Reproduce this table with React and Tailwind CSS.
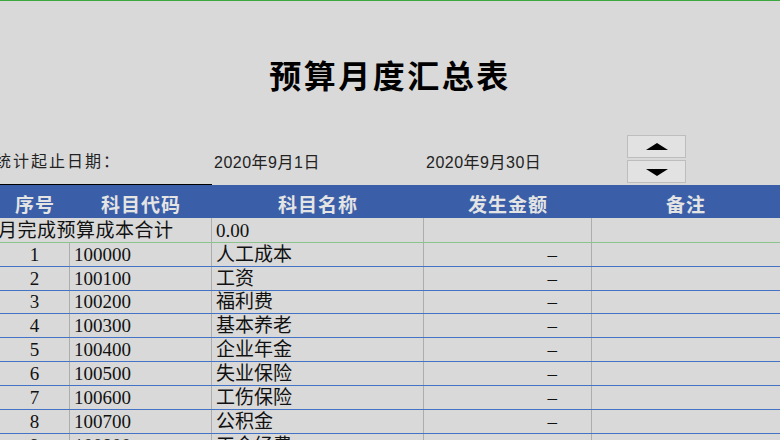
const bodyFont = { fontFamily: "'Liberation Serif', 'Noto Sans CJK SC', serif" };
const dateFont = { fontFamily: "'Liberation Sans', 'Noto Sans CJK SC', sans-serif" };

const rows = [
  { h: 'h-[24px]', no: '1', code: '100000', name: '人工成本' },
  { h: 'h-[24px]', no: '2', code: '100100', name: '工资' },
  { h: 'h-[23px]', no: '3', code: '100200', name: '福利费' },
  { h: 'h-[24px]', no: '4', code: '100300', name: '基本养老' },
  { h: 'h-[24px]', no: '5', code: '100400', name: '企业年金' },
  { h: 'h-[24px]', no: '6', code: '100500', name: '失业保险' },
  { h: 'h-[24px]', no: '7', code: '100600', name: '工伤保险' },
  { h: 'h-[24px]', no: '8', code: '100700', name: '公积金' },
  { h: 'h-[24px]', no: '9', code: '100800', name: '工会经费' },
];

const Spinner = () => (
  <div className="ml-[35px] flex flex-col gap-[2px] pt-[5px]">
    <div className="w-[59px] h-[23px] border border-[#bdbdbd] bg-[#e2e2e2] flex items-center justify-center">
      <svg width="24" height="8" viewBox="0 0 24 8">
        <polygon points="12,0 23,7 1,7" fill="#000" />
      </svg>
    </div>
    <div className="w-[59px] h-[23px] border border-[#bdbdbd] bg-[#e2e2e2] flex items-center justify-center">
      <svg width="24" height="8" viewBox="0 0 24 8">
        <polygon points="1,1 23,1 12,8" fill="#000" />
      </svg>
    </div>
  </div>
);

const Row = ({ h, no, code, name }) => (
  <div className={`flex shrink-0 ${h} border-b border-[#4472c4] text-[19px] leading-[20px] text-[#111]`} style={bodyFont}>
    <div className="w-[70px] border-r border-[#adadad] flex items-end justify-center pb-[1px]">{no}</div>
    <div className="w-[142px] border-r border-[#adadad] flex items-end pl-[4px] pb-[1px]">{code}</div>
    <div className="w-[212px] border-r border-[#adadad] flex items-end pl-[4px] pb-[1px]">{name}</div>
    <div className="w-[168px] border-r border-[#adadad] flex items-end justify-end pr-[34px] pb-[1px]">–</div>
    <div className="w-[188px]"></div>
  </div>
);

export default function App() {
  return (
    <div className="w-[780px] h-[440px] overflow-hidden bg-[#d9d9d9] border-t border-[#3aa83f] flex flex-col">
      {/* Title */}
      <div className="h-[129px] flex justify-center pt-[57px] shrink-0">
        <h1
          className="text-[32px] leading-[32px] font-bold tracking-[2.5px] text-black"
          style={{ fontFamily: "'Noto Sans CJK SC', sans-serif" }}
        >
          预算月度汇总表
        </h1>
      </div>

      {/* Date range row */}
      <div className="h-[55px] flex shrink-0">
        <div className="w-[212px] border-b border-black flex items-end pb-[13px]">
          <span className="-ml-[5px] text-[16px] leading-[18px] tracking-[2px] text-[#222] whitespace-nowrap" style={bodyFont}>
            统计起止日期：
          </span>
        </div>
        <div className="w-[212px] flex items-end pl-[2px] pb-[13px]">
          <span className="text-[16px] leading-[18px] tracking-[0.5px] text-[#222]" style={dateFont}>
            2020年9月1日
          </span>
        </div>
        <div className="w-[168px] flex items-end pl-[2px] pb-[13px]">
          <span className="text-[16px] leading-[18px] tracking-[0.5px] text-[#222]" style={dateFont}>
            2020年9月30日
          </span>
        </div>
        <Spinner />
      </div>

      {/* Header */}
      <div
        className="h-[33px] bg-[#3a5fa8] flex shrink-0 text-[19px] leading-[22px] font-bold text-[#e4e4e4] tracking-[1px]"
        style={{ fontFamily: "'Noto Sans CJK SC', serif" }}
      >
        <div className="w-[70px] flex items-end justify-center pb-[3px]">序号</div>
        <div className="w-[142px] flex items-end justify-center pb-[3px]">科目代码</div>
        <div className="w-[212px] flex items-end justify-center pb-[3px]">科目名称</div>
        <div className="w-[168px] flex items-end justify-center pb-[3px]">发生金额</div>
        <div className="w-[188px] flex items-end justify-center pb-[3px]">备注</div>
      </div>

      {/* Total row */}
      <div
        className="h-[25px] flex shrink-0 border-b border-[#8cc38c] text-[19px] leading-[20px] text-[#111]"
        style={bodyFont}
      >
        <div className="w-[212px] border-r border-[#adadad] flex items-end pb-[1px] overflow-hidden">
          <span className="-ml-[2px] tracking-[0.5px] whitespace-nowrap">月完成预算成本合计</span>
        </div>
        <div className="w-[212px] border-r border-[#adadad] flex items-end pl-[4px] pb-[1px]">0.00</div>
        <div className="w-[168px] border-r border-[#adadad]"></div>
        <div className="w-[188px]"></div>
      </div>

      {rows.map((r) => (
        <Row key={r.no} {...r} />
      ))}
    </div>
  );
}
